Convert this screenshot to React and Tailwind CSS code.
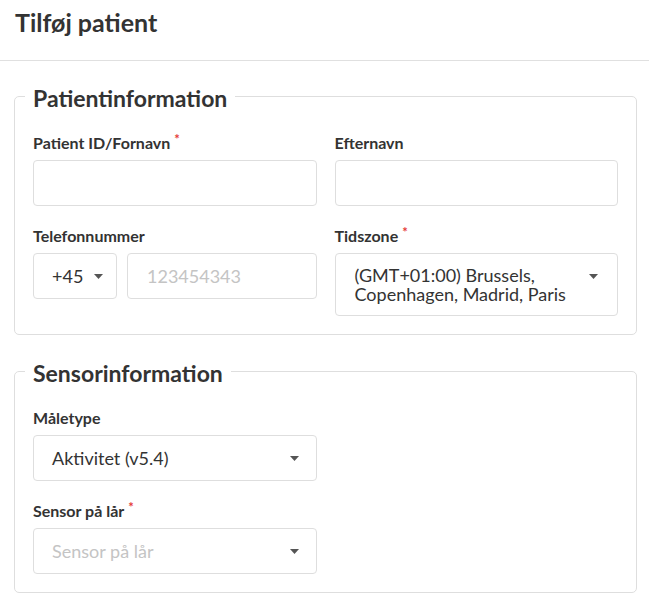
import React from "react";

function Caret() {
  return (
    <svg width="9" height="5" viewBox="0 0 9 5" className="shrink-0">
      <polygon points="0,0 9,0 4.5,5" fill="#555" />
    </svg>
  );
}

function Label({ children, required }) {
  return (
    <div className="text-[16px] leading-[20px] font-bold text-[#333] mb-[7px]">
      {children}
      {required && (
        <span className="text-[#e53935] text-[13px] align-top relative top-[-4px] ml-[4px] font-bold">*</span>
      )}
    </div>
  );
}

function TextInput({ placeholder }) {
  return (
    <div className="h-[46px] border border-[#dedede] rounded-[4px] flex items-center pl-[19px] text-[18px] text-[#c4c4c4] bg-white">
      {placeholder}
    </div>
  );
}

function Select({ value, placeholder }) {
  return (
    <div className="h-[46px] border border-[#dedede] rounded-[4px] flex items-center justify-between pl-[18px] pr-[17px] text-[18px] bg-white">
      <span className={value ? "text-[#333]" : "text-[#c4c4c4]"}>{value || placeholder}</span>
      <Caret />
    </div>
  );
}

export default function App() {
  return (
    <div className="bg-white min-h-[604px] w-[649px] font-['Lato','Noto_Sans',sans-serif] text-[#333]">
      <div className="h-[61px] border-b border-[#e0e0e0] pt-[8px] pl-[15px]">
        <h1 className="text-[25px] leading-[29px] font-bold text-[#333]">Tilføj patient</h1>
      </div>

      <fieldset className="ml-[14px] mr-[12px] mt-[19px] border border-[#dedede] rounded-[5px] px-[18px] pt-[20px] pb-[18px]">
        <legend className="-ml-2 px-2 pt-1 text-[23px] leading-[29px] font-bold text-[#333]">
          Patientinformation
        </legend>
        <div className="grid grid-cols-2 gap-x-[18px] gap-y-[20px]">
          <div>
            <Label required>Patient ID/Fornavn</Label>
            <TextInput />
          </div>
          <div>
            <Label>Efternavn</Label>
            <TextInput />
          </div>
          <div>
            <Label>Telefonnummer</Label>
            <div className="flex gap-[10px]">
              <div className="w-[84px] h-[46px] border border-[#dedede] rounded-[4px] flex items-center pl-[18px] gap-[11px] text-[18px] text-[#333]">
                <span>+45</span>
                <Caret />
              </div>
              <div className="flex-1">
                <TextInput placeholder="123454343" />
              </div>
            </div>
          </div>
          <div>
            <Label required>Tidszone</Label>
            <div className="border border-[#dedede] rounded-[4px] flex items-start justify-between pl-[19px] pr-[19px] py-[12px] text-[18px] leading-[18.5px] text-[#333]">
              <span>
                (GMT+01:00) Brussels,
                <br />
                Copenhagen, Madrid, Paris
              </span>
              <span className="pt-[8px]">
                <Caret />
              </span>
            </div>
          </div>
        </div>
      </fieldset>

      <fieldset className="ml-[14px] mr-[12px] mt-[20px] border border-[#dedede] rounded-[5px] px-[18px] pt-[20px] pb-[18px]">
        <legend className="-ml-2 px-2 pt-1 text-[23px] leading-[29px] font-bold text-[#333]">
          Sensorinformation
        </legend>
        <div className="grid grid-cols-2 gap-x-[18px] gap-y-[20px]">
          <div>
            <Label>Måletype</Label>
            <Select value="Aktivitet (v5.4)" />
          </div>
          <div />
          <div>
            <Label required>Sensor på lår</Label>
            <Select placeholder="Sensor på lår" />
          </div>
        </div>
      </fieldset>
    </div>
  );
}
